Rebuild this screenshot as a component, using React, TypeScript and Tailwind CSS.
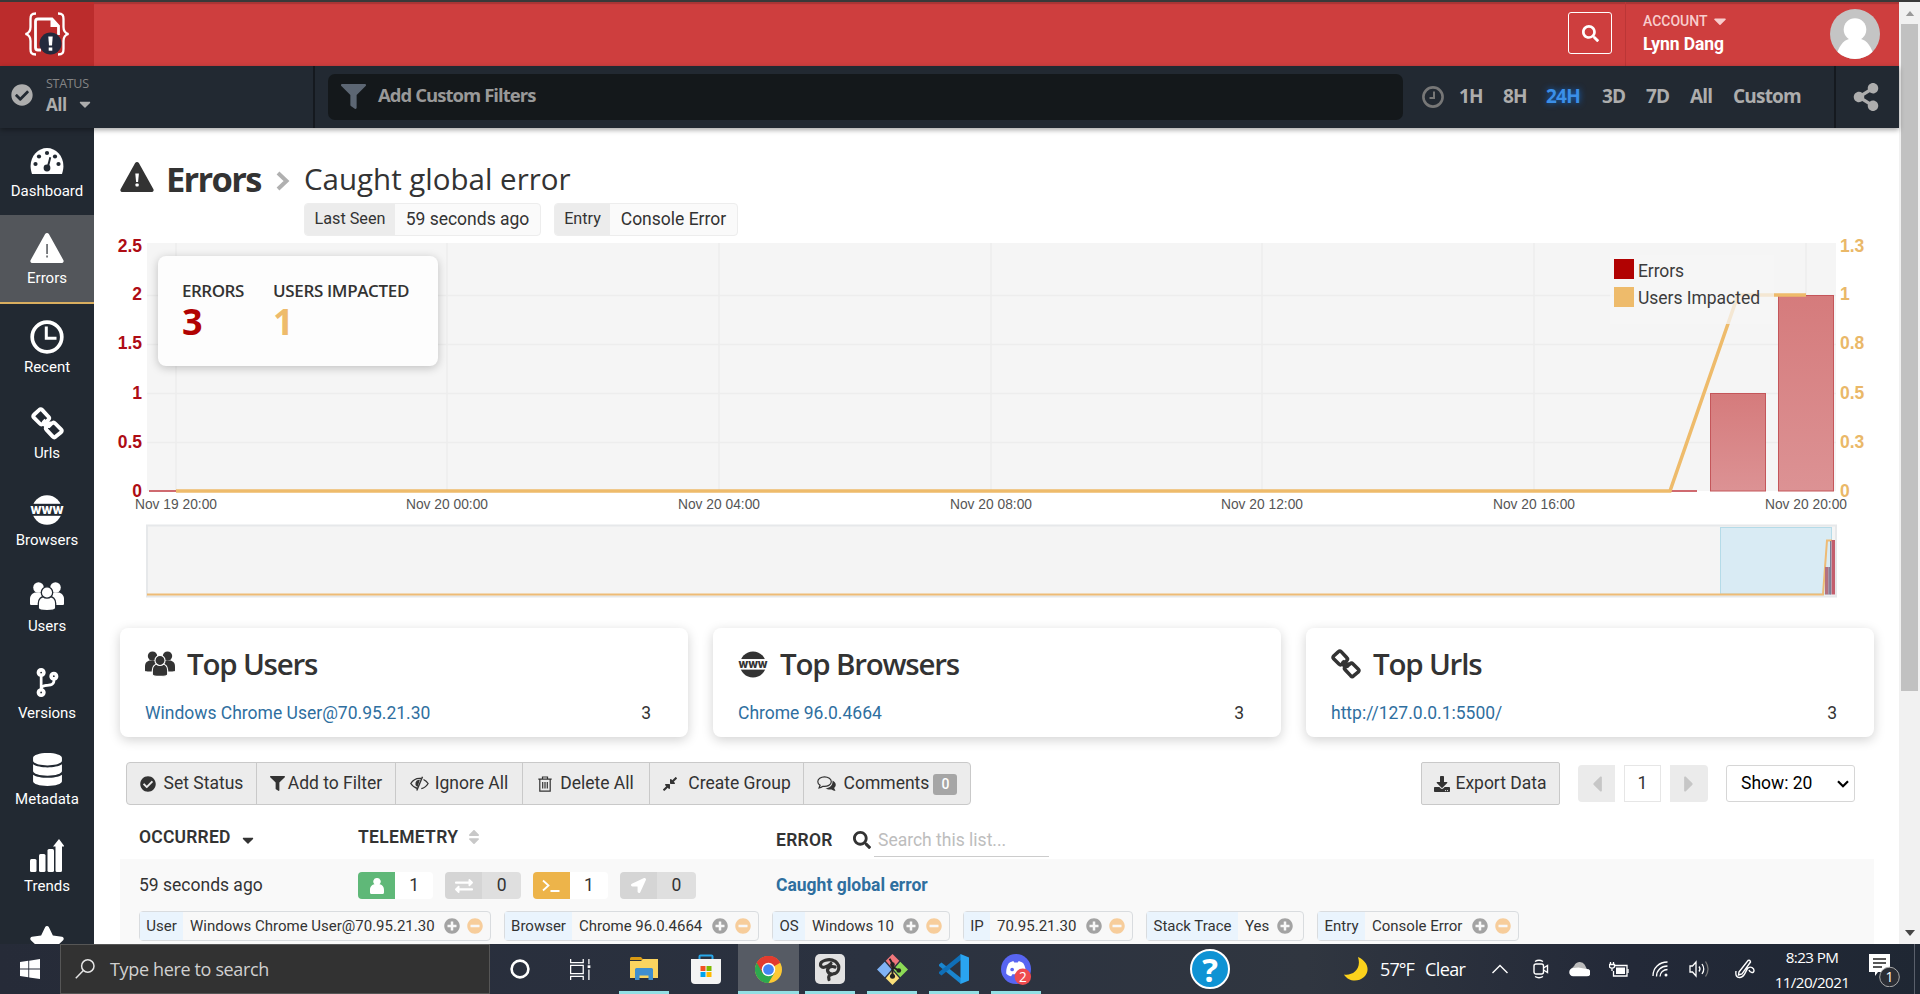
import React from "react";
import {
  FaCheckCircle, FaCaretDown, FaCaretLeft, FaCaretRight, FaFilter, FaShareAlt, FaSearch, FaDatabase, FaStar,
  FaCodeBranch, FaSort, FaPlusCircle, FaMinusCircle, FaExchangeAlt, FaLocationArrow, FaDownload, FaCompressAlt,
} from "react-icons/fa";

const HEAD = "font-['Open_Sans','Noto_Sans',sans-serif]";

const Gauge = () => (
  <svg viewBox="0 0 34 26" className="w-[34px] h-[26px]">
    <path fill="currentColor" d="M2 26C-3 12 6 0 17 0s20 12 15 26z" />
    <g fill="#222932">
      <circle cx="5.5" cy="16" r="2.1" /><circle cx="9" cy="8.5" r="2.1" /><circle cx="17" cy="5" r="2.1" />
      <circle cx="25" cy="8.5" r="2.1" /><circle cx="28.5" cy="16" r="2.1" /><circle cx="17" cy="20" r="3.4" />
      <path d="M19.4 9l1.800.5-2.400 10-2-.5z" />
    </g>
  </svg>
);
const Warning = ({ thin = false, className = "" }: { thin?: boolean; className?: string }) => (
  <svg viewBox="0 0 34 30" className={className}>
    <path fill="currentColor" d="M15 1.200c1-1.600 3-1.600 4 0l14.300 25.800c.9 1.600-.1 3-1.900 3H2.600C.8 30-.2 28.600.7 27z" />
    {thin ? (
      <g fill="#53565b"><rect x="16.300" y="11" width="1.500" height="10" /><rect x="16.300" y="22.500" width="1.500" height="2" /></g>
    ) : (
      <g fill="#fff"><path d="M15.300 11.500h3.600l-.8 8.500h-2z" /><rect x="15.500" y="21.500" width="3.200" height="3" rx=".8" /></g>
    )}
  </svg>
);
const Clock = () => (
  <svg viewBox="0 0 34 34" className="size-[34px]" fill="none" stroke="currentColor">
    <circle cx="17" cy="17" r="14.800" strokeWidth="3.700" /><path d="M16.300 6.500v11.800h10.200" strokeWidth="3" />
  </svg>
);
const Chain = ({ className = "" }: { className?: string }) => (
  <svg viewBox="0 0 34 34" className={className} fill="none" stroke="currentColor" strokeWidth="4" strokeLinejoin="round" strokeLinecap="butt">
    <path d="M12.500 13.500l2.500 2.500 3-3c1-1 1-2 0-3l-6.500-7c-1-1-2-1-3 0L3 8c-1 1-1 2 0 3l6 6c1 1 2.500 1 3.500 0l5.500 4.500" />
    <path d="M20.500 20.500L18 18l-2 2.500c-1 1-1 2 0 3l6.500 7c1 1 2 1 3 0L31 26c1-1 1-2 0-3l-6-6c-1-1-2.500-1-3.500 0L17 17" />
  </svg>
);
const Www = ({ gap, className = "" }: { gap: string; className?: string }) => (
  <svg viewBox="0 0 34 30" className={className}>
    <circle cx="17" cy="15" r="14.800" fill="currentColor" />
    <rect x="0" y="8.800" width="34" height="12" fill={gap} />
    <text x="17" y="18.600" textAnchor="middle" textLength="33" lengthAdjust="spacingAndGlyphs" fontFamily="Inter, sans-serif" fontWeight="800" fontSize="13" fill="currentColor">www</text>
  </svg>
);
const People = ({ gap, className = "" }: { gap: string; className?: string }) => (
  <svg viewBox="0 0 34 29" className={className} fill="currentColor">
    <circle cx="8.500" cy="5.500" r="5.300" /><circle cx="25.500" cy="5.500" r="5.300" />
    <path d="M0 22v-5c0-4 3-6.500 6-6.500h7c2 0 4 2 4 6V23H3c-2 0-3 0-3-1z" />
    <path d="M34 22v-5c0-4-3-6.500-6-6.500h-7c-2 0-4 2-4 6V23h14c2 0 3 0 3-1z" />
    <g stroke={gap} strokeWidth="1.300">
      <path d="M8.300 26v-4.500c0-4.500 3-7 6-7h5.400c3 0 6 2.500 6 7V26c0 1.800-3.700 2.600-8.700 2.600S8.300 27.800 8.300 26z" />
      <circle cx="17" cy="10.500" r="5.700" />
    </g>
  </svg>
);
const Growth = () => (
  <svg viewBox="0 0 34 33" className="w-[34px] h-[33px]" fill="currentColor">
    <rect x="0" y="20" width="6.500" height="13" rx="1.500" /><rect x="9" y="15" width="6.500" height="18" rx="1.500" />
    <rect x="17.500" y="10" width="6.500" height="23" rx="1.500" />
    <path d="M25.500 7.500h-2.500L29 0l5.500 7.500H32V31.500q0 1.500-1.500 1.500h-3.500q-1.500 0-1.500-1.500z" />
  </svg>
);
const Trash = () => (
  <svg viewBox="0 0 14 16" className="w-[14px] h-[16px]" fill="none" stroke="currentColor" strokeWidth="1.200">
    <path d="M.3 3.200h13.400M4.500 3V1h5v2M1.800 3.500v11.700h10.400V3.500M4.700 6v6.500M7 6v6.500M9.300 6v6.500" />
  </svg>
);
const EyeOff = () => (
  <svg viewBox="0 0 19 15" className="w-[19px] h-[15px]" fill="none" stroke="currentColor" strokeWidth="1.300">
    <path d="M7.500 12.500C4.500 11.700 2.200 9.800.8 7.500 2.800 4.200 6 2.300 9.500 2.300q1 0 1.800.2M13.500 3.500c2 1 3.500 2.300 4.600 4-1.600 2.700-4 4.500-6.800 5.100" />
    <path d="M12.500.8L6.800 14.500" strokeWidth="1.400" /><path d="M9 4.500c-3 0-4 4-1.800 5.500z" fill="currentColor" />
  </svg>
);
const Bubbles = () => (
  <svg viewBox="0 0 19 16" className="w-[19px] h-[16px]">
    <path d="M15.500 4.500c4 2 4 5.500 1.600 7.500l1.400 2.800c-1.500 0-2.800-.5-4-1.400-2 .4-4.500 0-6-1.200 4 0 7.500-2.500 7-7.700z" fill="currentColor" />
    <path d="M7.500.8C3.700.8.8 2.900.8 5.700c0 1.500.9 2.700 2.300 3.600L2 12c1.700-.2 2.900-.9 4-1.700 4.500.5 8.300-1.500 8.300-4.600C14.300 2.900 11.300.8 7.500.8z" fill="#ececec" stroke="currentColor" strokeWidth="1.200" />
  </svg>
);
const Person = () => (
  <svg viewBox="0 0 16 16" className="size-[16px]" fill="currentColor">
    <path d="M8 0a3.600 3.600 0 0 1 2.500 6.300C14 7 15 9.500 15 12v2.500q0 1.500-1.500 1.500h-11Q1 16 1 14.500V12c0-2.500 1-5 4.500-5.700A3.600 3.600 0 0 1 8 0z" />
  </svg>
);
const Logo = () => (
  <svg viewBox="0 0 46 44" className="w-[46px] h-[44px] mb-px" fill="none" stroke="#fff">
    <path d="M12 1.500C7 1.500 6.500 3.500 6.500 7v8c0 4-1 6-5 7 4 1 5 3 5 7v8c0 3.500.5 5.500 5.500 5.500M34 1.500c5 0 5.500 2 5.500 5.500v8c0 4 1 6 5 7-4 1-5 3-5 7v8c0 3.500-.5 5.500-5.500 5.500" strokeWidth="2.300" />
    <path d="M17 38h-3c-1.800 0-2.500-1-2.500-2.500v-26C11.500 7.700 12.500 7 14 7h14l6.500 7v9" strokeWidth="2.800" />
    <path d="M26.500 7v8H35z" fill="#fff" stroke="none" />
    <circle cx="26.500" cy="31.500" r="11" fill="#232a3d" stroke="none" />
    <path d="M24.300 24.500h4.400l-.7 9h-3z" fill="#fff" stroke="none" /><rect x="24.700" y="35.500" width="3.600" height="3.200" fill="#fff" stroke="none" />
  </svg>
);

const nav = [
  { label: "Dashboard", icon: <Gauge /> },
  { label: "Errors", icon: <Warning thin className="w-[34px] h-[30px]" />, active: true },
  { label: "Recent", icon: <Clock /> },
  { label: "Urls", icon: <Chain className="size-[33px]" /> },
  { label: "Browsers", icon: <Www gap="#222932" className="w-[34px] h-[30px]" /> },
  { label: "Users", icon: <People gap="#222932" className="w-[34px] h-[29px]" /> },
  { label: "Versions", icon: <FaCodeBranch className="size-[29px]" /> },
  { label: "Metadata", icon: <FaDatabase className="size-[33px]" /> },
  { label: "Trends", icon: <Growth /> },
  { label: "", icon: <FaStar className="size-[36px]" /> },
];

const ranges: [string, string][] = [
  ["1H", "w-[44px]"], ["8H", "w-[43px]"], ["24H", "w-[56px]"], ["3D", "w-[44px]"], ["7D", "w-[44px]"], ["All", "w-[43px]"], ["Custom", "w-[100px]"],
];

function TopBar() {
  return (
    <header className="flex h-[64px] bg-[#ce3e3e] text-white shrink-0 shadow-[inset_0_2px_1px_#a83535]">
      <div className="w-[94px] bg-[#bb2c2c] flex items-center justify-center"><Logo /></div>
      <div className="flex-1 flex justify-end items-center pr-[13px] pb-[2px]">
        <div className="w-[44px] h-[42px] border border-white rounded-[3px] flex items-center justify-center"><FaSearch className="size-[17px]" /></div>
      </div>
      <div className="w-[274px] border-l border-[#bb3636] flex items-center pl-[17px] pr-[19px] justify-between">
        <div className="flex flex-col leading-none pb-px">
          <div className="flex items-center text-[14px] font-medium text-[#f8cdcd] h-[19px]">ACCOUNT<FaCaretDown className="ml-[2px] size-[20px]" /></div>
          <div className="text-[17.500px] font-bold tracking-[-0.100px] h-[25px] leading-[26px]">Lynn Dang</div>
        </div>
        <svg viewBox="0 0 50 50" className="size-[50px] rounded-full">
          <rect width="50" height="50" fill="#c4c4c4" />
          <circle cx="25" cy="20.500" r="11.300" fill="#fff" /><path d="M6 50c1-12 8-19 13-20h12c5 1 12 8 13 20z" fill="#fff" />
        </svg>
      </div>
    </header>
  );
}

function FilterBar() {
  return (
    <div className={`relative z-10 flex h-[62px] bg-[#222932] text-[#adadad] shrink-0 shadow-[0_2px_5px_rgba(0,0,0,0.35)] ${HEAD}`}>
      <div className="w-[315px] border-r-2 border-[#15191f] flex items-center pl-[11px] pb-[4px]">
        <FaCheckCircle className="size-[22px]" />
        <div className="ml-[13px] flex flex-col leading-none">
          <span className="text-[12.500px] tracking-[-0.300px] text-[#858585] h-[18px] leading-[15px]">STATUS</span>
          <span className="flex items-center text-[17px] font-bold tracking-[-0.500px] h-[20px]">All<FaCaretDown className="ml-[9px] size-[18px]" /></span>
        </div>
      </div>
      <div className="flex-1 flex items-center pl-[13px] pb-px">
        <div className="w-[1075px] h-[46px] rounded-[7px] bg-[#14181b] flex items-center pl-[13px]">
          <FaFilter className="size-[25px] text-[#5c6673]" />
          <span className="ml-[12px] mb-[3px] text-[18.500px] font-bold tracking-[-0.950px] text-[#999]">Add Custom Filters</span>
        </div>
        <svg viewBox="0 0 22 22" className="size-[22px] ml-[19px] mr-[15px] text-[#777]" fill="none" stroke="currentColor">
          <circle cx="11" cy="11" r="9.600" strokeWidth="2.600" /><path d="M12 5.500v6.500H7.500" strokeWidth="2" />
        </svg>
        {ranges.map(([r, w]) => (
          <span key={r} className={`${w} text-[19px] font-bold tracking-[-0.800px] ${r === "24H" ? "text-[#3b8fe8] [text-shadow:0_0_6px_#1466c8]" : ""}`}>{r}</span>
        ))}
      </div>
      <div className="w-[65px] border-l-2 border-[#15191f] flex items-center justify-center pb-px"><FaShareAlt className="size-[28px] ml-[-4px]" /></div>
    </div>
  );
}

function Sidebar() {
  return (
    <nav className="w-[94px] bg-[#222932] text-white shrink-0 overflow-hidden">
      {nav.map((n) => (
        <div key={n.label} className={`flex flex-col items-center pt-[16px] ${n.active ? "h-[89px] bg-[#53565b] border-b-[2px] border-[#d9ae5f]" : "h-[86.500px]"}`}>
          <div className="h-[34px] flex items-center justify-center">{n.icon}</div>
          <div className="h-[26px] leading-[26px] text-[15px]">{n.label}</div>
        </div>
      ))}
    </nav>
  );
}

function Tag({ name, value, label, box }: { name: string; value: string; label: string; box: string }) {
  return (
    <div className={`flex ${box} h-[33px] rounded-[4px] border border-[#ededed] bg-[#fafafa] overflow-hidden items-center text-[17.500px]`}>
      <span className={`${label} h-full bg-[#ececec] flex items-center justify-center text-[16.200px]`}>{name}</span>
      <span className="flex-1 text-center">{value}</span>
    </div>
  );
}

const gridX = [176, 447, 719, 991, 1262, 1534, 1806];
const xLabels = ["Nov 19 20:00", "Nov 20 00:00", "Nov 20 04:00", "Nov 20 08:00", "Nov 20 12:00", "Nov 20 16:00", "Nov 20 20:00"];
const rows = [246, 294, 343, 393, 442, 491];
const left = ["2.5", "2", "1.5", "1", "0.5", "0"];
const right = ["1.3", "1", "0.8", "0.5", "0.3", "0"];

function Chart() {
  return (
    <div className="relative h-[362px] w-[1780px]">
      <svg viewBox="94 236 1780 362" className="w-[1780px] h-[362px] block" fontFamily="Liberation Sans, Arial, sans-serif">
        <defs>
          <linearGradient id="bar" x1="0" y1="0" x2="0" y2="1"><stop offset="0" stopColor="#d57b7c" /><stop offset="1" stopColor="#dc9294" /></linearGradient>
        </defs>
        <rect x="147" y="243" width="1689" height="248" fill="#f5f5f5" />
        <g stroke="#ededed" strokeWidth="1.500">
          {[295, 344, 393, 442].map((y) => <path key={y} d={`M147 ${y}.500H1836`} />)}
          {gridX.map((x) => <path key={x} d={`M${x} 243V491`} />)}
        </g>
        <g fill="url(#bar)" stroke="#c4565a">
          <rect x="1710.500" y="393.500" width="55" height="97.500" /><rect x="1778.500" y="295.500" width="55" height="195.500" />
        </g>
        <path d="M149 491H1697" stroke="#cf6a70" strokeWidth="2" />
        <path d="M176 491H1670L1738 295H1806" stroke="#eebb6b" strokeWidth="3.500" fill="none" />
        <rect x="1610" y="255" width="164" height="69" fill="#f5f5f5" fillOpacity=".75" />
        <rect x="1614" y="259" width="20" height="20" fill="#b10202" /><rect x="1614" y="287" width="20" height="20" fill="#eebb6b" />
        <g fontFamily="Roboto, sans-serif" fontSize="17.500" fill="#3c3c3c">
          <text x="1638" y="277" textLength="46">Errors</text><text x="1638" y="304" textLength="122">Users Impacted</text>
        </g>
        <g fontWeight="700" fontSize="17.500">
          {rows.map((y, i) => (
            <React.Fragment key={y}>
              <text x="142" y={y + 6} textAnchor="end" fill="#ae0c14">{left[i]}</text>
              <text x="1840" y={y + 6} fill="#eab868">{right[i]}</text>
            </React.Fragment>
          ))}
        </g>
        <g fontSize="14" fill="#555" textAnchor="middle">
          {gridX.map((x, i) => <text key={x} x={x} y="509" textLength="82" lengthAdjust="spacingAndGlyphs">{xLabels[i]}</text>)}
        </g>
        <rect x="147" y="525.500" width="1689" height="71" fill="#f4f4f4" stroke="#e6e8ea" strokeWidth="2" />
        <rect x="1720.500" y="527.500" width="111" height="66.500" fill="#d9ebf4" stroke="#b5dbe8" />
        <path d="M147 594.500H1823L1827 540.500H1832" stroke="#eebb75" strokeWidth="2" fill="none" />
        <rect x="1825" y="567" width="3.500" height="27.500" fill="#b4717f" /><rect x="1828.500" y="567" width="2" height="27.500" fill="#8a7f98" />
        <path d="M1830.500 541V594.500" stroke="#7b7f95" /><rect x="1831.500" y="540" width="3.500" height="54.500" fill="#c35d6c" />
      </svg>
      <div className={`absolute left-[64px] top-[20px] w-[280px] h-[110px] rounded-[8px] bg-[#fdfdfd] shadow-[0_2px_10px_rgba(0,0,0,0.22)] flex gap-[25px] pl-[24px] pt-[22px] text-[#333] ${HEAD}`}>
        <div className="w-[66px]"><div className="text-[17px] font-semibold tracking-[-0.500px] leading-[26px] whitespace-nowrap">ERRORS</div><div className="text-[36px] font-bold leading-[36px] text-[#b10202]">3</div></div>
        <div><div className="text-[17px] font-semibold tracking-[-0.350px] leading-[26px] whitespace-nowrap">USERS IMPACTED</div><div className="text-[36px] font-bold leading-[36px] text-[#eebb6b]">1</div></div>
      </div>
    </div>
  );
}

function TopCard({ icon, title, link }: { icon: React.ReactNode; title: string; link: string }) {
  return (
    <div className="w-[568px] h-[109px] rounded-[8px] bg-white shadow-[0_3px_12px_rgba(0,0,0,0.18)] px-[25px] pt-[12px]">
      <div className="flex items-center h-[48px]">{icon}<span className={`ml-[12px] text-[29.500px] font-semibold tracking-[-1.200px] ${HEAD}`}>{title}</span></div>
      <div className="flex justify-between pr-[12px] pt-[11px] text-[17.500px] leading-[28px]"><span className="text-[#2f6f9f]">{link}</span><span>3</span></div>
    </div>
  );
}

const tools: [React.ReactNode, string, string][] = [
  [<FaCheckCircle className="size-[16px] mr-[8px]" />, "Set Status", "w-[130px]"],
  [<FaFilter className="size-[15px] mr-[3px]" />, "Add to Filter", "w-[139px]"],
  [<EyeOff />, "Ignore All", "w-[127px]"],
  [<Trash />, "Delete All", "w-[127px]"],
  [<FaCompressAlt className="size-[16px] mr-[2px]" />, "Create Group", "w-[154px]"],
  [<Bubbles />, "Comments", "w-[166px]"],
];

function Toolbar() {
  return (
    <div className="flex items-center h-[43px] mt-[25px] pl-[6px] pr-[19px] text-[17.500px]">
      <div className="flex h-[43px] rounded-[4px] border border-[#c9c9c9] bg-[#ececec] divide-x divide-[#c9c9c9]">
        {tools.map(([icon, label, w], i) => (
          <div key={label} className={`${w} flex items-center justify-center whitespace-nowrap`}>
            {icon}<span className={i < 2 ? "" : i === 2 ? "ml-[6px]" : "ml-[8px]"}>{label}</span>
            {label === "Comments" && <span className="ml-[4px] mt-px w-[24px] h-[21px] rounded-[3px] bg-[#a6a6a6] text-white text-[14px] font-medium flex items-center justify-center">0</span>}
          </div>
        ))}
      </div>
      <div className="flex-1" />
      <div className="w-[139px] h-[43px] rounded-[2px] border border-[#c9c9c9] bg-[#ececec] flex items-center justify-center whitespace-nowrap"><FaDownload className="size-[16px] mr-[5px]" />Export Data</div>
      <div className="ml-[18px] w-[37px] h-[37px] bg-[#ebebeb] rounded-l-[4px] flex items-center justify-center text-[#c6c6c6]"><FaCaretLeft className="size-[26px]" /></div>
      <div className="ml-[9px] w-[37px] h-[37px] border border-[#e6e6e6] flex items-center justify-center">1</div>
      <div className="ml-[9px] w-[38px] h-[37px] bg-[#ebebeb] rounded-r-[4px] flex items-center justify-center text-[#c6c6c6]"><FaCaretRight className="size-[26px]" /></div>
      <div className="ml-[18px] w-[129px] h-[37px] border border-[#d6d6d6] rounded-[3px] flex items-center justify-between pl-[14px] pr-[5px] text-black">
        Show: 20
        <svg viewBox="0 0 12 8" className="w-[12px] h-[8px]" fill="none" stroke="#000" strokeWidth="2.200"><path d="M1 1.200l5 5 5-5" /></svg>
      </div>
    </div>
  );
}

const badges: { icon: React.ReactNode; n: number; bg: string; cell: string }[] = [
  { icon: <Person />, n: 1, bg: "bg-[#5fb878]", cell: "bg-white" },
  { icon: <FaExchangeAlt className="size-[18px]" />, n: 0, bg: "bg-[#d5d5d5]", cell: "bg-[#dfdfdf]" },
  { icon: <svg viewBox="0 0 18 14" className="w-[18px] h-[14px]" fill="none" stroke="currentColor" strokeWidth="1.800"><path d="M1 1.500L6.500 6.500 1 11.500M8.500 12H17.500" /></svg>, n: 1, bg: "bg-[#edb44a]", cell: "bg-white" },
  { icon: <FaLocationArrow className="size-[15px]" />, n: 0, bg: "bg-[#d5d5d5]", cell: "bg-[#dfdfdf]" },
];

const pills: [string, string, string, string, boolean][] = [
  ["User", "Windows Chrome User@70.95.21.30", "w-[352px]", "w-[43px]", true],
  ["Browser", "Chrome 96.0.4664", "w-[255px]", "w-[67px]", true],
  ["OS", "Windows 10", "w-[178px]", "w-[32px]", true],
  ["IP", "70.95.21.30", "w-[170px]", "w-[26px]", true],
  ["Stack Trace", "Yes", "w-[158px]", "w-[91px]", false],
  ["Entry", "Console Error", "w-[202px]", "w-[47px]", true],
];

function ErrorList() {
  return (
    <>
      <div className="flex h-[54px] text-[17.500px] font-medium pl-[19px]">
        <div className="w-[219px] flex items-center pt-[10px] h-[54px]"><span className="w-[98px] font-semibold tracking-[0.200px]">OCCURRED</span><FaCaretDown className="ml-[2px] mt-[5px] size-[18px]" /></div>
        <div className="w-[418px] flex items-center pt-[10px] h-[54px]"><span className="w-[105px] font-semibold tracking-[0.300px]">TELEMETRY</span><FaSort className="ml-[2px] size-[18px] text-[#c8c8c8]" /></div>
        <div className="flex items-center pt-[16px] h-[54px]">
          <span className="w-[61px] font-semibold tracking-[0.300px]">ERROR</span><FaSearch className="ml-[16px] size-[18px]" />
          <span className="ml-[3px] w-[175px] h-[33px] leading-[32px] pl-[4px] border-b border-[#ccc] font-normal text-[#bdbdbd]">Search this list...</span>
        </div>
      </div>
      <div className="bg-[#f9f9f9] h-[100px] pt-[13px]">
        <div className="flex h-[27px] items-center pl-[19px] text-[17.500px]">
          <div className="w-[219px]">59 seconds ago</div>
          <div className="w-[418px] flex gap-[12px]">
            {badges.map((b, i) => (
              <div key={i} className="flex w-[75.400px] h-[27px] rounded-[4px] overflow-hidden">
                <span className={`w-[37px] ${b.bg} text-white flex items-center justify-center`}>{b.icon}</span>
                <span className={`flex-1 ${b.cell} flex items-center justify-center`}>{b.n}</span>
              </div>
            ))}
          </div>
          <div className="font-bold text-[#2f6f9f]">Caught global error</div>
        </div>
        <div className="flex gap-[13px] pl-[19px] mt-[12px] text-[15px]">
          {pills.map(([k, v, w, lw, minus]) => (
            <div key={k} className={`${w} shrink-0 h-[30px] rounded-[4px] border border-[#d9dcdf] bg-[#f8f8f8] flex items-center pr-[7px] whitespace-nowrap`}>
              <span className={`${lw} h-full bg-[#eaf4fd] flex items-center justify-center`}>{k}</span>
              <span className="pl-[7px] flex-1">{v}</span>
              <FaPlusCircle className={`size-[16px] text-[#a3a3a3] ${minus ? "" : "mr-[3px]"}`} />
              {minus && <FaMinusCircle className="ml-[7px] size-[16px] text-[#f7cd9b]" />}
            </div>
          ))}
        </div>
      </div>
    </>
  );
}

function Scrollbar() {
  return (
    <div className="w-[21px] bg-[#f1f1f1] shrink-0 flex flex-col items-center">
      <div className="h-[22px] flex items-center"><svg viewBox="0 0 10 6" className="w-[10px] h-[5px]"><path d="M0 6L5 0l5 6z" fill="#999" /></svg></div>
      <div className="w-[17px] h-[667px] bg-[#c1c1c1]" />
      <div className="flex-1" />
      <div className="h-[22px] flex items-center"><svg viewBox="0 0 10 6" className="w-[10px] h-[6px]"><path d="M0 0l5 6 5-6z" fill="#444" /></svg></div>
    </div>
  );
}

const Tile = ({ w, children, line = "", active = false }: { w: string; children?: React.ReactNode; line?: string; active?: boolean }) => (
  <div className={`${w} h-[50px] shrink-0 flex flex-col items-center ${active ? "bg-[#565b64]" : ""}`}>
    <div className="h-[47px] pt-[3px] flex items-center justify-center">{children}</div>
    {line && <div className={`${line} h-[3px] bg-[#92dfe4]`} />}
  </div>
);

function Taskbar() {
  return (
    <footer className="h-[50px] flex items-center bg-[linear-gradient(90deg,#262b38_0%,#2b3240_45%,#303640_68%,#232938_85%,#1f2733_100%)] text-white font-['Open_Sans','Noto_Sans',sans-serif] shrink-0">
      <Tile w="w-[60px]"><svg viewBox="0 0 20 20" className="size-[20px]" fill="#fff"><path d="M0 3l8.300-1.200v7.700H0zM9.200 1.700L20 0v9.500H9.200zM0 10.500h8.300v7.700L0 17zM9.200 10.500H20V20L9.200 18.400z" /></svg></Tile>
      <div className="w-[430px] h-[50px] bg-[#323232] border border-[#565656] flex items-center pl-[14px] text-[#d0d0d0] text-[18px] tracking-[-0.350px]">
        <svg viewBox="0 0 20 20" className="size-[20px] mr-[15px]" fill="none" stroke="#e5e5e5" strokeWidth="1.500"><circle cx="12.800" cy="7" r="6.200" /><path d="M8.300 11.500L.8 19.200" /></svg>
        Type here to search
      </div>
      <Tile w="w-[60px]"><svg viewBox="0 0 20 20" className="size-[20px]" fill="none" stroke="#fff" strokeWidth="2.600"><circle cx="10" cy="10" r="8.400" /></svg></Tile>
      <Tile w="w-[61px]"><svg viewBox="0 0 20 20" className="size-[21px]" fill="none" stroke="#fff" strokeWidth="1.200"><path d="M.6 0v3.400h12V0M.6 20v-3.400h12V20M.6 6h12v8H.6zM18 0v5M18 10v10" /><rect x="16.800" y="6" width="2.600" height="2.600" fill="#fff" stroke="none" /></svg></Tile>
      <Tile w="w-[65px]" line="w-[50px]">
        <svg viewBox="0 0 28 24" className="w-[28px] h-[24px]"><path d="M0 1.500Q0 0 1.500 0H11l2.500 3H0z" fill="#d99a13" /><path d="M0 4h11l2-2h15v19H0z" fill="#fbd45f" /><path d="M5 23V12.500Q5 11 6.500 11h15q1.500 0 1.500 1.500V23h-4.500v-4.500h-9V23z" fill="#3f8fd0" /></svg>
      </Tile>
      <Tile w="w-[59px]">
        <svg viewBox="0 0 30 30" className="size-[30px]"><path d="M8.500 7V2.500Q8.500 1.500 9.500 1.500h11q1 0 1 1V7" fill="none" stroke="#28a8ea" strokeWidth="2" /><path d="M0 5h30v21q0 4-4 4H4q-4 0-4-4z" fill="#f4f4f4" /><path d="M9.500 12H14.500v5h-5z" fill="#f25022" /><path d="M15.500 12h5v5h-5z" fill="#7fba00" /><path d="M9.500 18h5v5h-5z" fill="#00a4ef" /><path d="M15.500 18h5v5h-5z" fill="#ffb900" /></svg>
      </Tile>
      <div className="w-[3px]" />
      <Tile w="w-[61px]" line="w-[61px]" active>
        <svg viewBox="0 0 48 48" className="size-[27px]"><circle cx="24" cy="24" r="24" fill="#fcc934" /><path d="M24 24L3.200 12A24 24 0 0 1 44.800 12z" fill="#e23b2e" /><path d="M3.200 12A24 24 0 0 0 24 48L34.400 30 24 24z" fill="#2da94f" /><path d="M24 12h20.800A24 24 0 0 0 3.200 12L13.600 30z" fill="#e23b2e" /><circle cx="24" cy="24" r="12" fill="#fff" /><circle cx="24" cy="24" r="9.500" fill="#4285f4" /></svg>
      </Tile>
      <Tile w="w-[62px]" line="w-[50px]">
        <svg viewBox="0 0 30 30" className="size-[30px]"><rect width="30" height="30" rx="5" fill="#e2e2e2" /><path d="M20.500 7.500C14 3.500 5 7 5.500 11c.5 4.500 8 1.500 10.500-1.500M20.500 7.500c6 5 3 12-2.500 12.500-5 .5-7-4-4-6.500 2-1.500 5-1 6-.5M18 20c-4 1-5 2-4 5.500" fill="none" stroke="#333" strokeWidth="3.200" strokeLinecap="round" /></svg>
      </Tile>
      <Tile w="w-[62px]" line="w-[50px]">
        <svg viewBox="0 0 32 32" className="size-[31px]"><path d="M16 0l7 7-7 8-7-8z" fill="#f0777c" /><path d="M8 8l7 8-7 8-8-8z" fill="#80b3f5" /><path d="M24 8l8 8-8 8-7-8z" fill="#8ddb56" /><path d="M16 17l7 8-7 7-7-7z" fill="#fbe07a" /><path d="M13 5l3 5v14M16 13l6 4" stroke="#222" strokeWidth="2" fill="none" /><circle cx="16" cy="11" r="2.400" fill="#222" /><circle cx="22.500" cy="17" r="2.400" fill="#222" /><circle cx="16" cy="23" r="2.600" fill="#222" /></svg>
      </Tile>
      <Tile w="w-[62px]" line="w-[50px]">
        <svg viewBox="0 0 30 30" className="size-[30px]"><path d="M0 10.500l2.500-2L22 24v6L0 12z" fill="#1a86cf" /><path d="M0 19.500l2.500 2L22 6V0L0 18z" fill="#0f6fb8" /><path d="M21.500 0L30 3.500v23L21.500 30z" fill="#2aa4f0" /></svg>
      </Tile>
      <Tile w="w-[62px]" line="w-[50px]">
        <svg viewBox="0 0 32 32" className="size-[31px]"><circle cx="15.500" cy="15.500" r="15.500" fill="#5865f2" /><path d="M8 9.500c2-1.500 4-2 5-2l.7 1.300h3.600L18 7.500c1 0 3 .5 5 2 2 3.500 3 7 2.500 11-1.500 1.500-3.500 2.500-5 2.500l-1.200-2h-7.600l-1.200 2c-1.500 0-3.500-1-5-2.500C5 16.500 6 13 8 9.500z" fill="#fff" /><circle cx="11.500" cy="16" r="1.900" fill="#5865f2" /><circle cx="22.500" cy="23.500" r="8.500" fill="#ee4b4f" /><text x="22.500" y="28.500" fontSize="14" textAnchor="middle" fill="#fff">2</text></svg>
      </Tile>
      <div className="w-[143px]" />
      <div className="w-[40px] h-[40px] rounded-full border-2 border-white bg-[#0f93d4] flex items-center justify-center text-[33px] leading-none font-bold">?</div>
      <div className="w-[114px]" />
      <svg viewBox="0 0 24 24" className="size-[24px]"><path d="M14 0c9 4 13 13 6 20-6 5.500-16 4.500-20-2.500C8 19 18 13 14 0z" fill="#fcd21c" /></svg>
      <div className="ml-[12px] w-[34px] text-[18px] tracking-[-0.900px] whitespace-nowrap">57°F</div>
      <div className="ml-[11px] w-[67px] text-[18px] tracking-[-0.600px]">Clear</div>
      <svg viewBox="0 0 16 10" className="w-[16px] h-[10px]" fill="none" stroke="#fff" strokeWidth="1.400"><path d="M.5 9L8 1.500 15.500 9" /></svg>
      <svg viewBox="0 0 16 20" className="w-[16px] h-[20px] ml-[25px]" fill="none" stroke="#fff" strokeWidth="1.400"><rect x="1" y="5" width="9.500" height="10" rx="2" /><path d="M10.500 9l4-2.500v7l-4-2.500M2 2.500q4-2.500 8 0M2 17.500q4 2.500 8 0" /></svg>
      <svg viewBox="0 0 20 14" className="w-[21px] h-[16px] ml-[20px]"><path d="M5 4a5.500 5.500 0 0 1 10-1l2 4H2z" fill="#bbb" /><path d="M4 14a4 4 0 0 1 .5-8L9 5.500 17 7a3.500 3.500 0 0 1 0 7z" fill="#fff" /></svg>
      <svg viewBox="0 0 20 15" className="w-[20px] h-[15px] ml-[19px]" fill="none" stroke="#fff" strokeWidth="1.300"><path d="M6 3.500h12V14H4.500V9" /><rect x="7" y="5.500" width="9" height="6.500" fill="#fff" stroke="none" /><path d="M19 7v4M1.500 0v2.500M4.500 0v2.500M.5 2.500h5V5q-2.500 2.500-5 0zM3 6v3" /></svg>
      <svg viewBox="0 0 16 16" className="size-[16px] ml-[23px]" fill="none" stroke="#fff" strokeWidth="1.300"><path d="M1 15C1 7 7 1 15.500 1M4.500 15.500C4.500 9.500 9 5 15.500 5M8 15.500C8 11.500 11.500 8.500 15.500 8.500" /><circle cx="14" cy="14" r="1.500" fill="#fff" stroke="none" /></svg>
      <svg viewBox="0 0 20 18" className="w-[20px] h-[18px] ml-[21px]" fill="none" stroke="#fff" strokeWidth="1.300"><path d="M1 6h2.500L7 2v14l-3.500-4H1zM10 6.500q2 2.500 0 5M13 4q3.500 5 0 10" /><path d="M16.500 1.500q5 7.500 0 15" stroke="#777" /></svg>
      <svg viewBox="0 0 20 20" className="size-[20px] ml-[26px]" fill="none" stroke="#fff" strokeWidth="1.400"><path d="M4 13L13 1.500q2-1 2.500 1.500L7 15l-3.500 1zM1 12q-1 7 4 6.500c5-.5 5-6 8-9.500 3-2 6 0 6 2.500 0 3-4 2.500-5-.5" /></svg>
      <div className="ml-[13px] w-[88px] text-center text-[15.200px] tracking-[-0.600px] leading-[27px]"><div className="h-[25px] leading-[22px]">8:23 PM</div><div className="h-[22px] leading-[22px]">11/20/2021</div></div>
      <svg viewBox="0 0 32 36" className="w-[32px] h-[36px] ml-[13px]"><path d="M0 3h21v18H9l-3 4v-4H0z" fill="#fff" /><path d="M4 8h13M4 12h13M4 16h9" stroke="#222" strokeWidth="1.300" /><circle cx="20.500" cy="26" r="9.800" fill="#2b2e35" stroke="#aaa" /><text x="20.500" y="31" fontSize="14" fill="#fff" textAnchor="middle">1</text></svg>
      <div className="ml-[13px] w-px h-[50px] bg-[#5a606b]" />
    </footer>
  );
}

export default function App() {
  return (
    <div className="w-[1920px] h-[994px] overflow-hidden flex flex-col bg-white font-['Roboto',sans-serif] text-[#333]">
      <div className="h-[2px] bg-[#393939] shrink-0" />
      <div className="flex h-[942px] overflow-hidden shrink-0">
        <div className="w-[1899px] flex flex-col h-[942px]">
          <TopBar />
          <FilterBar />
          <div className="flex h-[816px]">
            <Sidebar />
            <main className="flex-1 h-[816px] overflow-hidden bg-white">
              <div className="flex pl-[26px] pt-[25px] h-[108px]">
                <Warning className="w-[34px] h-[30px] mt-[9px] shrink-0" />
                <span className={`ml-[12px] w-[97px] text-[34.500px] leading-[52px] font-bold tracking-[-1.700px] ${HEAD}`}>Errors</span>
                <svg viewBox="0 0 14 20" className="w-[14px] h-[20px] ml-[13px] mt-[18px] shrink-0" fill="none" stroke="#b0b0b0" strokeWidth="4"><path d="M2 2l8.500 8L2 18" /></svg>
                <div className="ml-[14px]">
                  <div className={`h-[50px] text-[29.500px] leading-[52px] ${HEAD}`}>Caught global error</div>
                  <div className="flex gap-[13px]">
                    <Tag name="Last Seen" value="59 seconds ago" box="w-[237px]" label="w-[90px]" />
                    <Tag name="Entry" value="Console Error" box="w-[184px]" label="w-[55px]" />
                  </div>
                </div>
              </div>
              <Chart />
              <div className="pl-[26px] pr-[25px] pt-[30px]">
                <div className="flex gap-[25px]">
                  <TopCard icon={<People gap="#fff" className="w-[30px] h-[26px]" />} title="Top Users" link="Windows Chrome User@70.95.21.30" />
                  <TopCard icon={<Www gap="#fff" className="w-[30px] h-[27px]" />} title="Top Browsers" link="Chrome 96.0.4664" />
                  <TopCard icon={<Chain className="size-[30px]" />} title="Top Urls" link="http://127.0.0.1:5500/" />
                </div>
                <Toolbar />
                <ErrorList />
              </div>
            </main>
          </div>
        </div>
        <Scrollbar />
      </div>
      <Taskbar />
    </div>
  );
}
